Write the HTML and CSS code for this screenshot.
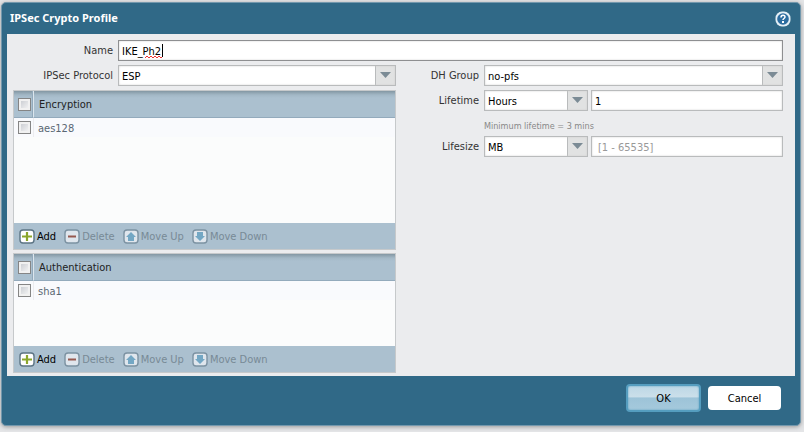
FILE: index.html
```
<!DOCTYPE html>
<html lang="en">
<head>
    <meta charset="UTF-8">
    <meta name="viewport" content="width=device-width, initial-scale=1.0">
    <title>IPSec Crypto Profile</title>
    <link rel="stylesheet" href="styles.css">
</head>
<body>

<!-- Icons shared by the two grid toolbars -->
<svg class="symbols" aria-hidden="true">
    <symbol id="icon-add" viewBox="0 0 16 16">
        <rect x="1" y="1" width="14" height="13" rx="3" fill="#fff" stroke="#5c7484" stroke-width="1.4"/>
        <path d="M8 3v9M3 7.5h10" stroke="#8aa62c" stroke-width="2.2"/>
    </symbol>
    <symbol id="icon-delete" viewBox="0 0 16 16">
        <rect x="1" y="1" width="14" height="13" rx="3" fill="#dfe6ed" stroke="#7c92a2" stroke-width="1.4"/>
        <path d="M4 7.5h8" stroke="#96594f" stroke-width="2"/>
    </symbol>
    <symbol id="icon-up" viewBox="0 0 16 16">
        <rect x="1" y="1" width="14" height="13" rx="3" fill="#dfe6ed" stroke="#7c92a2" stroke-width="1.4"/>
        <path d="M8 3l5 5h-2v4H5V8H3z" fill="#73a7c4"/>
    </symbol>
    <symbol id="icon-down" viewBox="0 0 16 16">
        <rect x="1" y="1" width="14" height="13" rx="3" fill="#dfe6ed" stroke="#7c92a2" stroke-width="1.4"/>
        <path d="M8 12l5-5h-2V3H5v4H3z" fill="#73a7c4"/>
    </symbol>
</svg>

<form class="dialog">
    <header class="dialog-header">
        <h1>IPSec Crypto Profile</h1>
        <button type="button" class="help" aria-label="Help">
            <svg width="16" height="16" viewBox="0 0 16 16">
                <rect x="0.5" y="0.5" width="15" height="15" rx="6.5" fill="#e4eff6"/>
                <circle cx="8" cy="8" r="5.8" fill="#2c6da0"/>
                <path d="M6 6.5c0-3 4-2.800 4-.5 0 1.500-2 1.500-2 3" fill="none" stroke="#fff" stroke-width="1.500"/>
                <rect x="7" y="10" width="2" height="2" fill="#fff"/>
            </svg>
        </button>
    </header>

    <div class="dialog-body">
        <div class="field">
            <label for="name">Name</label>
            <div class="name-box">
                <input type="text" id="name" value="IKE_Ph2" spellcheck="false">
                <svg class="spelling" width="18" height="3" viewBox="0 0 18 3">
                    <path d="M0 2l2-2 2 2 2-2 2 2 2-2 2 2 2-2 2 2 2-2" fill="none" stroke="#e33" stroke-width="1"/>
                </svg>
                <span class="caret"></span>
            </div>
        </div>

        <div class="columns">
            <div class="column">
                <div class="field">
                    <label for="protocol">IPSec Protocol</label>
                    <select id="protocol">
                        <option>ESP</option>
                        <option>AH</option>
                    </select>
                </div>

                <section class="grid grid-tall">
                    <table>
                        <thead>
                            <tr>
                                <th class="check"><input type="checkbox" aria-label="Select all encryption"></th>
                                <th>Encryption</th>
                            </tr>
                        </thead>
                        <tbody>
                            <tr>
                                <td class="check"><input type="checkbox" aria-label="Select aes128"></td>
                                <td>aes128</td>
                            </tr>
                        </tbody>
                    </table>
                    <div class="toolbar">
                        <button type="button"><svg><use href="#icon-add"/></svg>Add</button>
                        <button type="button" disabled><svg><use href="#icon-delete"/></svg>Delete</button>
                        <button type="button" disabled><svg><use href="#icon-up"/></svg>Move Up</button>
                        <button type="button" disabled><svg><use href="#icon-down"/></svg>Move Down</button>
                    </div>
                </section>

                <section class="grid">
                    <table>
                        <thead>
                            <tr>
                                <th class="check"><input type="checkbox" aria-label="Select all authentication"></th>
                                <th>Authentication</th>
                            </tr>
                        </thead>
                        <tbody>
                            <tr>
                                <td class="check"><input type="checkbox" aria-label="Select sha1"></td>
                                <td>sha1</td>
                            </tr>
                        </tbody>
                    </table>
                    <div class="toolbar">
                        <button type="button"><svg><use href="#icon-add"/></svg>Add</button>
                        <button type="button" disabled><svg><use href="#icon-delete"/></svg>Delete</button>
                        <button type="button" disabled><svg><use href="#icon-up"/></svg>Move Up</button>
                        <button type="button" disabled><svg><use href="#icon-down"/></svg>Move Down</button>
                    </div>
                </section>
            </div>

            <div class="column column-right">
                <div class="field">
                    <label for="dhGroup">DH Group</label>
                    <select id="dhGroup">
                        <option>no-pfs</option>
                    </select>
                </div>
                <div class="field">
                    <label for="lifetimeUnit">Lifetime</label>
                    <select id="lifetimeUnit" class="unit">
                        <option>Hours</option>
                    </select>
                    <input type="text" value="1" aria-label="Lifetime value">
                </div>
                <p class="hint">Minimum lifetime = 3 mins</p>
                <div class="field">
                    <label for="lifesizeUnit">Lifesize</label>
                    <select id="lifesizeUnit" class="unit">
                        <option>MB</option>
                    </select>
                    <input type="text" placeholder="[1 - 65535]" aria-label="Lifesize value">
                </div>
            </div>
        </div>
    </div>

    <footer class="dialog-footer">
        <button type="button" class="btn btn-ok">OK</button>
        <button type="button" class="btn">Cancel</button>
    </footer>
</form>

</body>
</html>
```
FILE: styles.css
```
* {
    box-sizing: border-box;
}

body {
    margin: 0;
    padding: 2px 3px 6px 1px;
    background-color: #e4e5e7;
    font-family: "DejaVu Sans Condensed", Tahoma, "DejaVu Sans", sans-serif;
    font-size: 11px;
    line-height: 14px;
    color: #333;
}

input, select, button {
    font: inherit;
    color: #000;
}

.symbols {
    display: none;
}

.dialog {
    background-color: #306987;
    border: 1px solid #7398ad;
    border-radius: 5px;
    padding: 0 5px;
    box-shadow: 0 1px 4px #999;
}

.dialog-header {
    display: flex;
    align-items: center;
    justify-content: space-between;
    height: 31px;
    padding: 0 4px 0 3px;
}

.dialog-header h1 {
    margin: 0;
    padding-bottom: 2px;
    font-family: "Noto Sans", sans-serif;
    font-size: 11px;
    font-weight: bold;
    color: #fff;
}

.help {
    display: flex;
    padding: 0;
    border: none;
    background: none;
    cursor: pointer;
}

.dialog-body {
    padding: 6px 12px 3px 6px;
    background-color: #ebecee;
}

/* Form fields */
.field {
    display: flex;
    align-items: center;
    gap: 3px;
    margin-bottom: 4px;
}

.field label {
    width: 102px;
    padding-right: 2px;
    flex: none;
    text-align: right;
}

.column-right .field label {
    width: 77px;
}

.field input, .field select {
    flex: 1;
    width: 100%;
    min-width: 0;
    height: 21px;
    margin: 0;
    padding: 2px 3px 0;
    border: 1px solid #b9bbbc;
    border-radius: 0;
    background-color: #fff;
    box-shadow: inset 0 0 2px #ccc;
    outline: none;
}

.field select {
    appearance: none;
    padding-right: 22px;
    background-image:
        url("data:image/svg+xml,%3Csvg xmlns='http://www.w3.org/2000/svg' width='12' height='6'%3E%3Cpath d='M0 0h11L5.500 6z' fill='%237b8b95'/%3E%3C/svg%3E"),
        linear-gradient(to right, #b9bbbc 1px, #e1e2e2 1px);
    background-repeat: no-repeat;
    background-position: right 3px top 6px, right top;
    background-size: 12px 6px, 20px 100%;
}

.field .unit {
    flex: 0 0 104px;
}

.field input::placeholder {
    padding-left: 3px;
    color: #999;
    opacity: 1;
}

.name-box {
    position: relative;
    display: flex;
    flex: 1;
}

.field .name-box input {
    border-color: #8e8f91;
}

.spelling {
    position: absolute;
    left: 27px;
    top: 16px;
}

.caret {
    position: absolute;
    left: 44px;
    top: 4px;
    width: 1px;
    height: 13px;
    background-color: #000;
}

.hint {
    margin: 8px 0 3px 80px;
    font-size: 9px;
    color: #888;
}

.columns {
    display: grid;
    grid-template-columns: 383fr 379fr;
    gap: 8px;
}

/* Grids with a toolbar */
.grid {
    display: flex;
    flex-direction: column;
    justify-content: space-between;
    min-height: 120px;
    border: 1px solid #c6c9cb;
    background-color: #fbfcfc;
}

.grid-tall {
    min-height: 160px;
    margin-bottom: 3px;
}

.grid table {
    width: 100%;
    border-collapse: separate;
    border-spacing: 0;
    table-layout: fixed;
}

.grid th {
    height: 27px;
    padding: 2px 5px 0;
    border-bottom: 1px solid #93aabc;
    background: linear-gradient(#8397a3, #a3b8c6 4px, #abc0cf 7px);
    color: #222;
    font-weight: normal;
    text-align: left;
}

.grid td {
    height: 19px;
    padding: 2px 4px 0;
    background-color: #f9fafd;
    color: #5a6773;
}

.grid .check {
    width: 20px;
    padding: 0 0 0 4px;
    line-height: 0;
}

.grid th.check {
    border-right: 1px solid #dce6ed;
    box-shadow: inset -1px 0 #93aabc;
}

.grid td.check {
    border-right: 1px solid #ececef;
}

.check input {
    appearance: none;
    width: 13px;
    height: 13px;
    margin: 0;
    border: 1px solid #858585;
    background: linear-gradient(135deg, #c3c6cc, #fafafa);
    box-shadow: inset 0 0 0 2px #f1f1f1;
    vertical-align: middle;
}

.toolbar {
    display: flex;
    align-items: center;
    gap: 8px;
    height: 26px;
    padding: 2px 5px 0;
    background-color: #abc0cf;
}

.toolbar button {
    display: flex;
    align-items: center;
    gap: 2px;
    padding: 0;
    border: none;
    background: none;
    white-space: nowrap;
    cursor: pointer;
}

.toolbar button:disabled {
    color: #788a96;
    cursor: default;
}

.toolbar svg {
    width: 16px;
    height: 16px;
}

/* Footer */
.dialog-footer {
    display: flex;
    align-items: center;
    justify-content: flex-end;
    gap: 7px;
    height: 49px;
    padding: 0 14px 5px 0;
}

.btn {
    width: 73px;
    height: 24px;
    padding: 2px 0 0;
    border: none;
    border-radius: 4px;
    background-color: #fff;
    cursor: pointer;
}

.btn-ok {
    width: 75px;
    height: 28px;
    border: 2px solid #559dbf;
    background: linear-gradient(#bcd7e5, #cbdfea 45%, #9dc3d8 50%, #a5c9dc);
    box-shadow: inset 0 0 2px #559dbf;
}
```
